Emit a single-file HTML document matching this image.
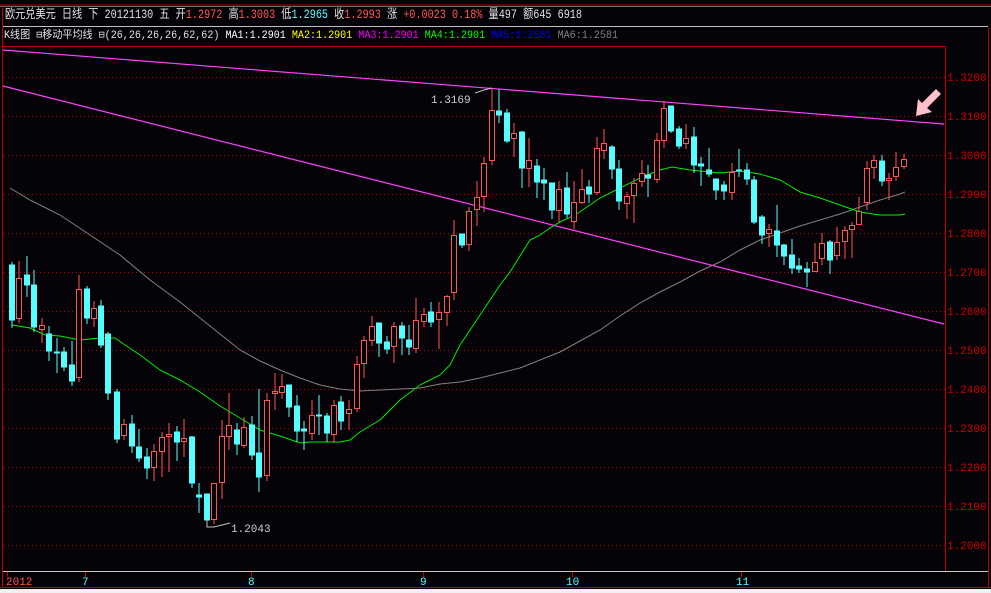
<!DOCTYPE html>
<html><head><meta charset="utf-8"><style>
html,body{margin:0;padding:0;background:#050307;width:991px;height:593px;overflow:hidden}
svg{display:block}
text{font-family:"Liberation Mono","Noto Sans CJK SC",monospace}
</style></head><body>
<svg width="991" height="593" viewBox="0 0 991 593" xmlns="http://www.w3.org/2000/svg">
<rect width="991" height="593" fill="#050307"/>
<line x1="0" y1="5" x2="991" y2="5" stroke="#b00000"/>
<line x1="0" y1="6.5" x2="991" y2="6.5" stroke="#707070"/>
<line x1="3" y1="26.5" x2="988" y2="26.5" stroke="#c0c0c0"/>
<line x1="3" y1="46.5" x2="945" y2="46.5" stroke="#c00000"/>
<line x1="2.5" y1="5" x2="2.5" y2="588" stroke="#c00000"/>
<line x1="945.5" y1="46" x2="945.5" y2="571" stroke="#c00000"/>
<line x1="988.5" y1="27" x2="988.5" y2="588" stroke="#c00000"/>
<line x1="3" y1="571.5" x2="988" y2="571.5" stroke="#c8c8c8"/>
<line x1="0" y1="587.5" x2="991" y2="587.5" stroke="#c00000"/>
<rect x="0" y="589" width="991" height="4" fill="#f0f0f0"/>
<text x="5" y="18" font-size="12.5" fill="#e0e0e0" textLength="577" lengthAdjust="spacingAndGlyphs" font-family="Liberation Sans,Noto Sans CJK SC,sans-serif">欧元兑美元 日线 下 20121130 五 开<tspan fill="#ff5555">1.2972</tspan> 高<tspan fill="#ff5555">1.3003</tspan> 低<tspan fill="#55ffff">1.2965</tspan> 收<tspan fill="#ff5555">1.2993</tspan> 涨 <tspan fill="#ff5555">+0.0023 0.18%</tspan> 量497 额645 6918</text>
<text x="4" y="38" font-size="11" fill="#e0e0e0" textLength="614" lengthAdjust="spacingAndGlyphs" font-family="Liberation Sans,Noto Sans CJK SC,sans-serif">K线图 ⊟移动平均线 ⊟(26,26,26,26,62,62) <tspan fill="#ffffff">MA1:1.2901</tspan> <tspan fill="#ffff00">MA2:1.2901</tspan> <tspan fill="#ff00ff">MA3:1.2901</tspan> <tspan fill="#00ff00">MA4:1.2901</tspan> <tspan fill="#0000ff">MA5:1.2581</tspan> <tspan fill="#808080">MA6:1.2581</tspan></text>
<g stroke="#b00000" stroke-dasharray="1,3">
<line x1="4" y1="77.5" x2="945" y2="77.5"/><line x1="4" y1="116.5" x2="945" y2="116.5"/><line x1="4" y1="155.5" x2="945" y2="155.5"/><line x1="4" y1="194.5" x2="945" y2="194.5"/><line x1="4" y1="233.5" x2="945" y2="233.5"/><line x1="4" y1="272.5" x2="945" y2="272.5"/><line x1="4" y1="311.5" x2="945" y2="311.5"/><line x1="4" y1="350.5" x2="945" y2="350.5"/><line x1="4" y1="389.5" x2="945" y2="389.5"/><line x1="4" y1="428.5" x2="945" y2="428.5"/><line x1="4" y1="467.5" x2="945" y2="467.5"/><line x1="4" y1="506.5" x2="945" y2="506.5"/><line x1="4" y1="545.5" x2="945" y2="545.5"/>
</g>
<g font-size="11" fill="#d00000">
<text x="947" y="81">1.3200</text><text x="947" y="120">1.3100</text><text x="947" y="159">1.3000</text><text x="947" y="198">1.2900</text><text x="947" y="237">1.2800</text><text x="947" y="276">1.2700</text><text x="947" y="315">1.2600</text><text x="947" y="354">1.2500</text><text x="947" y="393">1.2400</text><text x="947" y="432">1.2300</text><text x="947" y="471">1.2200</text><text x="947" y="510">1.2100</text><text x="947" y="549">1.2000</text>
</g>
<g stroke="#c00000"><line x1="7.5" y1="572" x2="7.5" y2="577"/><line x1="85.5" y1="572" x2="85.5" y2="577"/><line x1="251.5" y1="572" x2="251.5" y2="577"/><line x1="423.5" y1="572" x2="423.5" y2="577"/><line x1="572.5" y1="572" x2="572.5" y2="577"/><line x1="741.5" y1="572" x2="741.5" y2="577"/></g>
<g font-size="11"><text x="6" y="585" fill="#ff5555">2012</text><text x="82" y="585" fill="#55ffff">7</text><text x="248" y="585" fill="#55ffff">8</text><text x="420" y="585" fill="#55ffff">9</text><text x="566" y="585" fill="#55ffff">10</text><text x="736" y="585" fill="#55ffff">11</text></g>
<line x1="3" y1="50" x2="944" y2="124" stroke="#ff40ff" stroke-width="1.2"/>
<line x1="3" y1="86" x2="944" y2="324" stroke="#ff40ff" stroke-width="1.2"/>
<polyline fill="none" stroke="#808080" points="10,188 30,200 60,215 90,235 120,255 150,280 180,302 200,318 220,334 240,350 260,361 280,370 300,378 320,385 340,389 360,391 380,390 400,389 420,388 440,384 460,382 480,378 500,373 520,368 540,360 560,352 580,341 600,330 620,316 640,303 660,292 680,282 700,271 720,262 740,250 760,240 780,233 800,226 820,220 840,214 860,207 880,200 900,194 905,192"/>
<polyline fill="none" stroke="#00ee00" points="12,325 30,328 45,335 60,336 80,340 100,338 115,338 125,345 140,355 160,370 180,380 200,392 220,406 240,418 260,430 280,436 300,443 310,442 340,442 350,440 360,432 380,420 400,400 420,385 440,375 450,365 460,345 470,330 480,315 490,300 500,285 510,272 520,256 530,240 540,235 550,228 560,222 575,215 590,205 600,198 620,188 640,178 660,170 672,167 690,170 720,173 740,171 760,174 780,180 800,192 820,198 840,205 860,212 880,215 900,215 905,214"/>
<g>
<g stroke="#55ffff" fill="#55ffff">
<line x1="12" y1="262" x2="12" y2="328"/><rect x="9.5" y="265" width="5" height="55"/>
<line x1="27" y1="256" x2="27" y2="297"/><rect x="24.5" y="275" width="5" height="10"/>
<line x1="34" y1="270" x2="34" y2="332"/><rect x="31.5" y="285" width="5" height="42"/>
<line x1="49" y1="326" x2="49" y2="361"/><rect x="46.5" y="334" width="5" height="17"/>
<line x1="57" y1="338" x2="57" y2="373"/><rect x="54.5" y="352" width="5" height="1"/>
<line x1="64" y1="347" x2="64" y2="371"/><rect x="61.5" y="352" width="5" height="15"/>
<line x1="72" y1="341" x2="72" y2="386"/><rect x="69.5" y="365" width="5" height="16"/>
<line x1="87" y1="286" x2="87" y2="324"/><rect x="84.5" y="289" width="5" height="29"/>
<line x1="101" y1="300" x2="101" y2="348"/><rect x="98.5" y="306" width="5" height="39"/>
<line x1="108" y1="332" x2="108" y2="400"/><rect x="105.5" y="334" width="5" height="59"/>
<line x1="117" y1="389" x2="117" y2="443"/><rect x="114.5" y="392" width="5" height="47"/>
<line x1="132" y1="415" x2="132" y2="453"/><rect x="129.5" y="424" width="5" height="22"/>
<line x1="139" y1="429" x2="139" y2="462"/><rect x="136.5" y="447" width="5" height="11"/>
<line x1="147" y1="448" x2="147" y2="479"/><rect x="144.5" y="457" width="5" height="11"/>
<line x1="177" y1="426" x2="177" y2="461"/><rect x="174.5" y="432" width="5" height="10"/>
<line x1="192" y1="436" x2="192" y2="488"/><rect x="189.5" y="437" width="5" height="46"/>
<line x1="199" y1="483" x2="199" y2="513"/><rect x="196.5" y="495" width="5" height="2"/>
<line x1="207" y1="494" x2="207" y2="527"/><rect x="204.5" y="494" width="5" height="26"/>
<line x1="237" y1="423" x2="237" y2="455"/><rect x="234.5" y="430" width="5" height="14"/>
<line x1="252" y1="416" x2="252" y2="460"/><rect x="249.5" y="425" width="5" height="30"/>
<line x1="259" y1="389" x2="259" y2="492"/><rect x="256.5" y="453" width="5" height="24"/>
<line x1="289" y1="385" x2="289" y2="417"/><rect x="286.5" y="385" width="5" height="22"/>
<line x1="297" y1="395" x2="297" y2="442"/><rect x="294.5" y="406" width="5" height="25"/>
<line x1="304" y1="421" x2="304" y2="450"/><rect x="301.5" y="429" width="5" height="2"/>
<line x1="319" y1="395" x2="319" y2="435"/><rect x="316.5" y="415" width="5" height="1"/>
<line x1="327" y1="413" x2="327" y2="442"/><rect x="324.5" y="416" width="5" height="17"/>
<line x1="341" y1="396" x2="341" y2="430"/><rect x="338.5" y="402" width="5" height="19"/>
<line x1="379" y1="323" x2="379" y2="357"/><rect x="376.5" y="323" width="5" height="20"/>
<line x1="387" y1="336" x2="387" y2="354"/><rect x="384.5" y="342" width="5" height="7"/>
<line x1="402" y1="322" x2="402" y2="355"/><rect x="399.5" y="326" width="5" height="12"/>
<line x1="409" y1="325" x2="409" y2="355"/><rect x="406.5" y="340" width="5" height="7"/>
<line x1="431" y1="302" x2="431" y2="327"/><rect x="428.5" y="312" width="5" height="10"/>
<line x1="462" y1="234" x2="462" y2="248"/><rect x="459.5" y="234" width="5" height="11"/>
<line x1="499" y1="89" x2="499" y2="123"/><rect x="496.5" y="111" width="5" height="4"/>
<line x1="507" y1="109" x2="507" y2="143"/><rect x="504.5" y="113" width="5" height="28"/>
<line x1="522" y1="131" x2="522" y2="188"/><rect x="519.5" y="132" width="5" height="36"/>
<line x1="537" y1="159" x2="537" y2="198"/><rect x="534.5" y="166" width="5" height="16"/>
<line x1="544" y1="168" x2="544" y2="200"/><rect x="541.5" y="180" width="5" height="3"/>
<line x1="552" y1="183" x2="552" y2="219"/><rect x="549.5" y="183" width="5" height="27"/>
<line x1="567" y1="172" x2="567" y2="218"/><rect x="564.5" y="188" width="5" height="26"/>
<line x1="589" y1="180" x2="589" y2="203"/><rect x="586.5" y="187" width="5" height="7"/>
<line x1="612" y1="145" x2="612" y2="179"/><rect x="609.5" y="147" width="5" height="22"/>
<line x1="619" y1="160" x2="619" y2="210"/><rect x="616.5" y="169" width="5" height="32"/>
<line x1="648" y1="165" x2="648" y2="197"/><rect x="645.5" y="175" width="5" height="3"/>
<line x1="671" y1="106" x2="671" y2="133"/><rect x="668.5" y="106" width="5" height="25"/>
<line x1="679" y1="126" x2="679" y2="149"/><rect x="676.5" y="129" width="5" height="17"/>
<line x1="694" y1="127" x2="694" y2="173"/><rect x="691.5" y="137" width="5" height="28"/>
<line x1="701" y1="157" x2="701" y2="186"/><rect x="698.5" y="164" width="5" height="2"/>
<line x1="709" y1="148" x2="709" y2="177"/><rect x="706.5" y="170" width="5" height="4"/>
<line x1="716" y1="179" x2="716" y2="200"/><rect x="713.5" y="179" width="5" height="11"/>
<line x1="724" y1="181" x2="724" y2="200"/><rect x="721.5" y="185" width="5" height="6"/>
<line x1="739" y1="149" x2="739" y2="177"/><rect x="736.5" y="170" width="5" height="1"/>
<line x1="747" y1="163" x2="747" y2="185"/><rect x="744.5" y="170" width="5" height="9"/>
<line x1="754" y1="176" x2="754" y2="224"/><rect x="751.5" y="180" width="5" height="42"/>
<line x1="762" y1="215" x2="762" y2="244"/><rect x="759.5" y="217" width="5" height="18"/>
<line x1="777" y1="205" x2="777" y2="257"/><rect x="774.5" y="231" width="5" height="14"/>
<line x1="784" y1="244" x2="784" y2="265"/><rect x="781.5" y="245" width="5" height="11"/>
<line x1="792" y1="239" x2="792" y2="274"/><rect x="789.5" y="255" width="5" height="13"/>
<line x1="799" y1="258" x2="799" y2="273"/><rect x="796.5" y="266" width="5" height="3"/>
<line x1="807" y1="262" x2="807" y2="287"/><rect x="804.5" y="269" width="5" height="3"/>
<line x1="830" y1="240" x2="830" y2="274"/><rect x="827.5" y="242" width="5" height="18"/>
<line x1="882" y1="155" x2="882" y2="186"/><rect x="879.5" y="161" width="5" height="20"/>
</g>
<g stroke="#ff5555" fill="#050307">
<line x1="19" y1="261" x2="19" y2="323"/><rect x="16.5" y="278.5" width="5" height="40"/>
<line x1="42" y1="318" x2="42" y2="343"/><rect x="39.5" y="325.5" width="5" height="4"/>
<line x1="79" y1="275" x2="79" y2="382"/><rect x="76.5" y="289.5" width="5" height="88"/>
<line x1="94" y1="301" x2="94" y2="327"/><rect x="91.5" y="308.5" width="5" height="10"/>
<line x1="124" y1="419" x2="124" y2="440"/><rect x="121.5" y="424.5" width="5" height="11"/>
<line x1="154" y1="444" x2="154" y2="481"/><rect x="151.5" y="451.5" width="5" height="16"/>
<line x1="162" y1="432" x2="162" y2="477"/><rect x="159.5" y="437.5" width="5" height="14"/>
<line x1="169" y1="423" x2="169" y2="472"/><rect x="166.5" y="434.5" width="5" height="2"/>
<line x1="184" y1="419" x2="184" y2="457"/><rect x="181.5" y="438.5" width="5" height="3"/>
<line x1="214" y1="483" x2="214" y2="524"/><rect x="211.5" y="483.5" width="5" height="36"/>
<line x1="222" y1="420" x2="222" y2="499"/><rect x="219.5" y="436.5" width="5" height="46"/>
<line x1="229" y1="393" x2="229" y2="450"/><rect x="226.5" y="425.5" width="5" height="11"/>
<line x1="244" y1="417" x2="244" y2="448"/><rect x="241.5" y="427.5" width="5" height="18"/>
<line x1="267" y1="393" x2="267" y2="481"/><rect x="264.5" y="400.5" width="5" height="75"/>
<line x1="275" y1="373" x2="275" y2="410"/><rect x="272.5" y="391.5" width="5" height="2"/>
<line x1="282" y1="374" x2="282" y2="399"/><rect x="279.5" y="386.5" width="5" height="6"/>
<line x1="312" y1="400" x2="312" y2="440"/><rect x="309.5" y="415.5" width="5" height="18"/>
<line x1="334" y1="400" x2="334" y2="443"/><rect x="331.5" y="405.5" width="5" height="29"/>
<line x1="349" y1="400" x2="349" y2="430"/><rect x="346.5" y="409.5" width="5" height="4"/>
<line x1="357" y1="356" x2="357" y2="412"/><rect x="354.5" y="364.5" width="5" height="44"/>
<line x1="364" y1="336" x2="364" y2="378"/><rect x="361.5" y="340.5" width="5" height="23"/>
<line x1="372" y1="316" x2="372" y2="346"/><rect x="369.5" y="326.5" width="5" height="14"/>
<line x1="394" y1="322" x2="394" y2="363"/><rect x="391.5" y="326.5" width="5" height="20"/>
<line x1="416" y1="298" x2="416" y2="353"/><rect x="413.5" y="320.5" width="5" height="28"/>
<line x1="424" y1="308" x2="424" y2="327"/><rect x="421.5" y="314.5" width="5" height="7"/>
<line x1="439" y1="302" x2="439" y2="349"/><rect x="436.5" y="312.5" width="5" height="7"/>
<line x1="447" y1="295" x2="447" y2="326"/><rect x="444.5" y="296.5" width="5" height="16"/>
<line x1="454" y1="220" x2="454" y2="300"/><rect x="451.5" y="235.5" width="5" height="57"/>
<line x1="469" y1="207" x2="469" y2="251"/><rect x="466.5" y="211.5" width="5" height="33"/>
<line x1="477" y1="181" x2="477" y2="226"/><rect x="474.5" y="197.5" width="5" height="12"/>
<line x1="484" y1="157" x2="484" y2="212"/><rect x="481.5" y="163.5" width="5" height="33"/>
<line x1="492" y1="88" x2="492" y2="165"/><rect x="489.5" y="110.5" width="5" height="50"/>
<line x1="514" y1="123" x2="514" y2="157"/><rect x="511.5" y="133.5" width="5" height="5"/>
<line x1="529" y1="138" x2="529" y2="187"/><rect x="526.5" y="160.5" width="5" height="8"/>
<line x1="559" y1="181" x2="559" y2="222"/><rect x="556.5" y="189.5" width="5" height="21"/>
<line x1="574" y1="181" x2="574" y2="229"/><rect x="571.5" y="202.5" width="5" height="19"/>
<line x1="582" y1="169" x2="582" y2="204"/><rect x="579.5" y="189.5" width="5" height="13"/>
<line x1="597" y1="137" x2="597" y2="195"/><rect x="594.5" y="148.5" width="5" height="44"/>
<line x1="604" y1="129" x2="604" y2="159"/><rect x="601.5" y="143.5" width="5" height="7"/>
<line x1="627" y1="192" x2="627" y2="219"/><rect x="624.5" y="196.5" width="5" height="7"/>
<line x1="634" y1="178" x2="634" y2="223"/><rect x="631.5" y="183.5" width="5" height="12"/>
<line x1="642" y1="160" x2="642" y2="187"/><rect x="639.5" y="173.5" width="5" height="8"/>
<line x1="657" y1="133" x2="657" y2="183"/><rect x="654.5" y="140.5" width="5" height="39"/>
<line x1="664" y1="101" x2="664" y2="148"/><rect x="661.5" y="108.5" width="5" height="32"/>
<line x1="686" y1="124" x2="686" y2="149"/><rect x="683.5" y="138.5" width="5" height="5"/>
<line x1="732" y1="163" x2="732" y2="200"/><rect x="729.5" y="172.5" width="5" height="20"/>
<line x1="769" y1="224" x2="769" y2="247"/><rect x="766.5" y="229.5" width="5" height="4"/>
<line x1="815" y1="243" x2="815" y2="271"/><rect x="812.5" y="262.5" width="5" height="9"/>
<line x1="822" y1="233" x2="822" y2="265"/><rect x="819.5" y="243.5" width="5" height="15"/>
<line x1="837" y1="227" x2="837" y2="260"/><rect x="834.5" y="242.5" width="5" height="13"/>
<line x1="845" y1="226" x2="845" y2="259"/><rect x="842.5" y="230.5" width="5" height="11"/>
<line x1="852" y1="222" x2="852" y2="258"/><rect x="849.5" y="225.5" width="5" height="4"/>
<line x1="859" y1="197" x2="859" y2="225"/><rect x="856.5" y="211.5" width="5" height="13"/>
<line x1="867" y1="161" x2="867" y2="210"/><rect x="864.5" y="168.5" width="5" height="34"/>
<line x1="874" y1="155" x2="874" y2="179"/><rect x="871.5" y="160.5" width="5" height="7"/>
<line x1="889" y1="173" x2="889" y2="200"/><rect x="886.5" y="178.5" width="5" height="2"/>
<line x1="896" y1="152" x2="896" y2="181"/><rect x="893.5" y="167.5" width="5" height="9"/>
<line x1="904" y1="154" x2="904" y2="169"/><rect x="901.5" y="159.5" width="5" height="7"/>
</g>
</g>
<polyline fill="none" stroke="#c0c0c0" points="475,93 484,90 492,88"/>
<text x="431" y="103" font-size="11" fill="#d0d0d0">1.3169</text>
<polyline fill="none" stroke="#c0c0c0" points="207,520 207,527 214,527 230,523"/>
<text x="231" y="532" font-size="11" fill="#d0d0d0">1.2043</text>
<path d="M916,116 L918,99 L922,103 L936,89 L941,94 L927,108 L932,112 Z" fill="#ffc0cc"/>
</svg>
</body></html>
